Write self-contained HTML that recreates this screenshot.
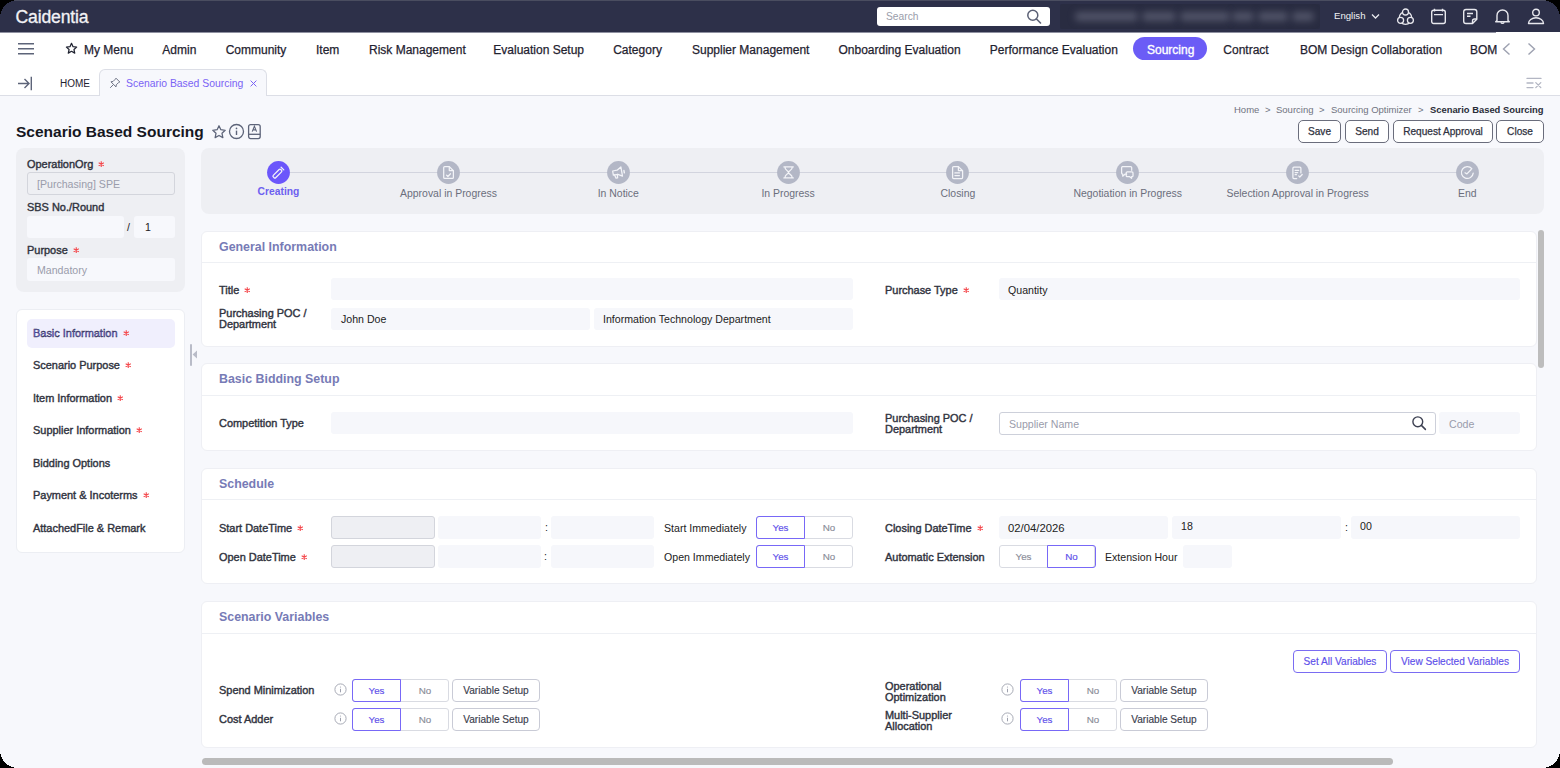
<!DOCTYPE html>
<html><head><meta charset="utf-8">
<style>
*{box-sizing:border-box;margin:0;padding:0}
html,body{width:1560px;height:768px;overflow:hidden;background:#000}
body{font-family:"Liberation Sans",sans-serif;color:#222}
#app{position:absolute;left:0;top:0;width:1560px;height:768px;overflow:hidden;background:#f7f8fc}
.a{position:absolute;white-space:nowrap}
#top{position:absolute;left:0;top:0;width:1560px;height:32px;background:#2d3049}
#nav{position:absolute;left:0;top:32px;width:1560px;height:33px;background:#fff}
#tabs{position:absolute;left:0;top:65px;width:1560px;height:31px;background:#fff;border-bottom:1px solid #dcdee6}
.nv{position:absolute;top:10.5px;font-size:12px;line-height:14px;color:#1f2230;-webkit-text-stroke:0.25px #1f2230}
.panel{position:absolute;background:#fff;border:1px solid #eeeff4;border-radius:6px}
.ptitle{position:absolute;left:17px;font-size:12.4px;font-weight:bold;color:#777bb6}
.pdiv{position:absolute;left:0;right:0;height:1px;background:#eef0f4}
.lbl{position:absolute;font-size:10.95px;font-weight:normal;-webkit-text-stroke:0.4px #30333e;color:#30333e;line-height:11px}
.ast{display:inline-block;margin-left:5px;vertical-align:0.8px}
.inp{position:absolute;background:#f6f7fb;border-radius:3px;height:22px}
.itxt{position:absolute;font-size:10.6px;color:#222;line-height:12px}
.dis{background:#eeeff3;border:1px solid #d3d5dc}
.tg{position:absolute;height:23px;border:1px solid #d9dbe2;border-radius:3px;background:#fff}
.tg .y,.tg .n{position:absolute;top:-1px;height:23px;font-size:9.8px;line-height:21px;text-align:center;-webkit-text-stroke:0.15px currentColor}
.tg .n{line-height:23px}
.btn{position:absolute;border:1px solid #c9cbd6;border-radius:4px;background:#fff;font-size:10.1px;text-align:center;color:#3a3d4d;-webkit-text-stroke:0.15px currentColor}
.ico{position:absolute}
.hb{border-color:#6a6d7c;border-radius:5px;color:#2f3240;-webkit-text-stroke:0.25px #2f3240;line-height:22px!important}
</style></head><body>
<div id="app">
  <!-- TOP BAR -->
  <div id="top">
    <div class="a" style="left:0;top:0;width:1560px;height:1px;background:#4a4d60"></div>
    <div class="a" style="left:15.5px;top:7px;font-size:17.6px;line-height:20px;color:#f2f2f5;letter-spacing:-0.15px;-webkit-text-stroke:0.3px #f2f2f5">Caidentia</div>
    <div class="a" style="left:877px;top:7px;width:173px;height:19px;background:#fff;border-radius:3px"></div>
    <div class="a" style="left:886px;top:10px;font-size:10.25px;line-height:13px;color:#9a9dab">Search</div>
    <svg class="ico" style="left:1026px;top:9px" width="16" height="15" viewBox="0 0 16 15"><circle cx="6.8" cy="6.3" r="5" fill="none" stroke="#5b6075" stroke-width="1.5"/><path d="M10.5 10 L14.5 14" stroke="#5b6075" stroke-width="1.6" stroke-linecap="round"/></svg>
    <div class="a" style="left:1060px;top:4px;width:260px;height:25px;background:#292c41;border-radius:2px;overflow:hidden">
      <div class="a" style="left:15px;top:8px;width:63px;height:9px;background:#515468;filter:blur(3.5px);border-radius:4px"></div><div class="a" style="left:82px;top:8px;width:34px;height:9px;background:#515468;filter:blur(3.5px);border-radius:4px"></div><div class="a" style="left:120px;top:8px;width:50px;height:9px;background:#515468;filter:blur(3.5px);border-radius:4px"></div><div class="a" style="left:172px;top:8px;width:22px;height:9px;background:#515468;filter:blur(3.5px);border-radius:4px"></div><div class="a" style="left:198px;top:8px;width:30px;height:9px;background:#515468;filter:blur(3.5px);border-radius:4px"></div><div class="a" style="left:232px;top:8px;width:22px;height:9px;background:#515468;filter:blur(3.5px);border-radius:4px"></div>
    </div>
    <div class="a" style="left:1334px;top:9px;font-size:9.6px;line-height:14px;color:#f0f0f4">English</div>
    <svg class="ico" style="left:1371px;top:13px" width="9" height="7" viewBox="0 0 9 7"><path d="M1 1.5 L4.5 5 L8 1.5" fill="none" stroke="#e8e8ee" stroke-width="1.3"/></svg>
    <svg class="ico" style="left:1396px;top:8px" width="19" height="17" viewBox="0 0 19 17"><circle cx="9.5" cy="10" r="6.3" fill="none" stroke="#e8e8ee" stroke-width="1.3"/><circle cx="9.5" cy="4" r="3" fill="#2d3049" stroke="#e8e8ee" stroke-width="1.3"/><circle cx="4.6" cy="12.3" r="3" fill="#2d3049" stroke="#e8e8ee" stroke-width="1.3"/><circle cx="14.4" cy="12.3" r="3" fill="#2d3049" stroke="#e8e8ee" stroke-width="1.3"/></svg>
    <svg class="ico" style="left:1430px;top:8px" width="17" height="17" viewBox="0 0 17 17"><rect x="1.7" y="2.2" width="13.6" height="13.3" rx="2" fill="none" stroke="#e8e8ee" stroke-width="1.4"/><path d="M4.5 0.8v2.6M12.5 0.8v2.6M4 6.6h9" stroke="#e8e8ee" stroke-width="1.4"/></svg>
    <svg class="ico" style="left:1462px;top:8px" width="17" height="17" viewBox="0 0 17 17"><path d="M10.5 15.5H4a2.3 2.3 0 0 1-2.3-2.3V3.8A2.3 2.3 0 0 1 4 1.5h8.5a2.3 2.3 0 0 1 2.3 2.3v7.5z" fill="none" stroke="#e8e8ee" stroke-width="1.4"/><path d="M10.5 15.5v-2.5a2 2 0 0 1 2-2h2.3M5 5.5h6M5 8.3h3.5" fill="none" stroke="#e8e8ee" stroke-width="1.4"/></svg>
    <svg class="ico" style="left:1494px;top:8px" width="17" height="17" viewBox="0 0 17 17"><path d="M3 12.5V7.5a5.5 5.5 0 0 1 11 0v5l1.3 1.2H1.7z" fill="none" stroke="#e8e8ee" stroke-width="1.4" stroke-linejoin="round"/><path d="M6.8 14.2a1.8 1.8 0 0 0 3.4 0" fill="none" stroke="#e8e8ee" stroke-width="1.3"/></svg>
    <svg class="ico" style="left:1527px;top:8px" width="18" height="17" viewBox="0 0 18 17"><circle cx="9" cy="4.6" r="3.3" fill="none" stroke="#e8e8ee" stroke-width="1.4"/><path d="M1.5 15.5a7.5 5.7 0 0 1 15 0z" fill="none" stroke="#e8e8ee" stroke-width="1.4" stroke-linejoin="round"/></svg>
  </div>
  <!-- NAV -->
  <div id="nav">
    <div class="a" style="left:0;top:0;width:1560px;height:1px;background:#8f91a1"></div>
    <svg class="ico" style="left:17px;top:10px" width="18" height="14" viewBox="0 0 18 14"><path d="M1 1.8h16M1 6.8h16M1 11.8h16" stroke="#5d6479" stroke-width="1.5"/></svg>
    <svg class="ico" style="left:65px;top:10px" width="13" height="13" viewBox="0 0 24 24"><path d="M12 2.5l2.9 6.2 6.6.7-4.9 4.5 1.4 6.6L12 17.2l-5.9 3.3 1.4-6.6-4.9-4.5 6.6-.7z" fill="none" stroke="#1f2230" stroke-width="2.3" stroke-linejoin="round"/></svg>
    <div class="nv" style="left:84px">My Menu</div>
    <div class="nv" style="left:162.3px">Admin</div>
    <div class="nv" style="left:225.7px">Community</div>
    <div class="nv" style="left:316px">Item</div>
    <div class="nv" style="left:369px">Risk Management</div>
    <div class="nv" style="left:493.3px">Evaluation Setup</div>
    <div class="nv" style="left:613.2px">Category</div>
    <div class="nv" style="left:692px">Supplier Management</div>
    <div class="nv" style="left:838.5px">Onboarding Evaluation</div>
    <div class="nv" style="left:989.8px">Performance Evaluation</div>
    <div class="nv" style="left:1223.3px">Contract</div>
    <div class="nv" style="left:1300px">BOM Design Collaboration</div>
    <div class="a" style="left:1133px;top:5px;width:74px;height:23px;border-radius:12px;background:#6b5cf6"></div>
    <div class="nv" style="left:1147px;color:#fff;-webkit-text-stroke:0.35px #fff">Sourcing</div>
    <div class="a" style="left:1496px;top:0;width:64px;height:33px;background:#fff"></div>
    <div class="nv" style="left:1470px">BOM</div>
    <svg class="ico" style="left:1500px;top:10px" width="13" height="14" viewBox="0 0 13 14"><path d="M9.5 1.5L3.5 7l6 5.5" fill="none" stroke="#9da1b0" stroke-width="1.4"/></svg>
    <svg class="ico" style="left:1525px;top:10px" width="13" height="14" viewBox="0 0 13 14"><path d="M3.5 1.5l6 5.5-6 5.5" fill="none" stroke="#9da1b0" stroke-width="1.4"/></svg>
  </div>
  <!-- TABS -->

  <!-- PAGE HEADER -->
  <div class="a" style="left:16px;top:123px;font-size:15.5px;line-height:18px;font-weight:bold;color:#15171f">Scenario Based Sourcing</div>
  <svg class="ico" style="left:210.5px;top:123.5px" width="16" height="16" viewBox="0 0 24 24"><path d="M12 2.6l2.8 6 6.5.8-4.8 4.5 1.3 6.5L12 17.2l-5.8 3.2 1.3-6.5-4.8-4.5 6.5-.8z" fill="none" stroke="#5d6479" stroke-width="1.9" stroke-linejoin="round"/></svg>
  <svg class="ico" style="left:228px;top:123px" width="17" height="17" viewBox="0 0 17 17"><circle cx="8.5" cy="8.5" r="7" fill="none" stroke="#5d6479" stroke-width="1.3"/><path d="M8.5 7.6v4.4" stroke="#5d6479" stroke-width="1.4"/><circle cx="8.5" cy="5.4" r="0.85" fill="#5d6479"/></svg>
  <svg class="ico" style="left:247px;top:123px" width="15" height="17" viewBox="0 0 15 17"><rect x="1.6" y="1.6" width="11.6" height="14" rx="2" fill="none" stroke="#5d6479" stroke-width="1.3"/><path d="M1.6 11.3h11.6" stroke="#5d6479" stroke-width="1.3"/><path d="M5.2 8.6l2.2-5.4 2.2 5.4M6 6.9h2.8" fill="none" stroke="#5d6479" stroke-width="1.1"/></svg>

  <!-- BREADCRUMB -->
  <div class="a" style="left:1234px;top:104px;font-size:9.5px;line-height:11px;color:#70737f">Home</div>
  <div class="a" style="left:1265px;top:104px;font-size:9.5px;line-height:11px;color:#70737f">&gt;</div>
  <div class="a" style="left:1276px;top:104px;font-size:9.5px;line-height:11px;color:#70737f">Sourcing</div>
  <div class="a" style="left:1319px;top:104px;font-size:9.5px;line-height:11px;color:#70737f">&gt;</div>
  <div class="a" style="left:1331px;top:104px;font-size:9.5px;line-height:11px;color:#70737f">Sourcing Optimizer</div>
  <div class="a" style="left:1418px;top:104px;font-size:9.5px;line-height:11px;color:#70737f">&gt;</div>
  <div class="a" style="left:1430px;top:104px;font-size:9.4px;line-height:11px;font-weight:bold;color:#2a2d38">Scenario Based Sourcing</div>
  <div class="btn hb" style="left:1298px;top:120px;width:43px;height:23px;line-height:21px">Save</div>
  <div class="btn hb" style="left:1345px;top:120px;width:44px;height:23px;line-height:21px">Send</div>
  <div class="btn hb" style="left:1393px;top:120px;width:100px;height:23px;line-height:21px">Request Approval</div>
  <div class="btn hb" style="left:1496px;top:120px;width:48px;height:23px;line-height:21px">Close</div>

  <!-- LEFT TOP PANEL -->
  <div class="a" style="left:16px;top:148px;width:169px;height:144px;background:#eeeff3;border-radius:8px"></div>
  <div class="lbl" style="left:27px;top:159px">OperationOrg<svg class="ast" width="6.5" height="6.5" viewBox="0 0 7 7"><path d="M3.5 0.3V6.7M0.73 1.9L6.27 5.1M0.73 5.1L6.27 1.9" stroke="#f4484c" stroke-width="1.2"/></svg></div>
  <div class="inp dis" style="left:27px;top:172px;width:148px;height:23px"></div>
  <div class="itxt" style="left:37px;top:178px;color:#9a9cab">[Purchasing] SPE</div>
  <div class="lbl" style="left:27px;top:202px">SBS No./Round</div>
  <div class="inp" style="left:27px;top:216px;width:97px;height:22px;background:#f7f8fc"></div>
  <div class="itxt" style="left:127px;top:221px">/</div>
  <div class="inp" style="left:134px;top:216px;width:41px;height:22px;background:#f7f8fc"></div>
  <div class="itxt" style="left:145px;top:221px">1</div>
  <div class="lbl" style="left:27px;top:245px">Purpose<svg class="ast" width="6.5" height="6.5" viewBox="0 0 7 7"><path d="M3.5 0.3V6.7M0.73 1.9L6.27 5.1M0.73 5.1L6.27 1.9" stroke="#f4484c" stroke-width="1.2"/></svg></div>
  <div class="inp" style="left:27px;top:258px;width:148px;height:23px;background:#f7f8fc"></div>
  <div class="itxt" style="left:37px;top:264px;color:#9a9cab">Mandatory</div>

  <!-- LEFT NAV PANEL -->
  <div class="a" style="left:16px;top:308.5px;width:169px;height:244.5px;background:#fff;border:1px solid #eceef3;border-radius:6px"></div>
  <div class="a" style="left:27px;top:319px;width:148px;height:29px;background:#f0effd;border-radius:5px"></div>
  <div class="lbl" style="left:33px;top:328px;color:#6d5ff0">Basic Information<svg class="ast" width="6.5" height="6.5" viewBox="0 0 7 7"><path d="M3.5 0.3V6.7M0.73 1.9L6.27 5.1M0.73 5.1L6.27 1.9" stroke="#f4484c" stroke-width="1.2"/></svg></div>
  <div class="lbl" style="left:33px;top:360px">Scenario Purpose<svg class="ast" width="6.5" height="6.5" viewBox="0 0 7 7"><path d="M3.5 0.3V6.7M0.73 1.9L6.27 5.1M0.73 5.1L6.27 1.9" stroke="#f4484c" stroke-width="1.2"/></svg></div>
  <div class="lbl" style="left:33px;top:393px">Item Information<svg class="ast" width="6.5" height="6.5" viewBox="0 0 7 7"><path d="M3.5 0.3V6.7M0.73 1.9L6.27 5.1M0.73 5.1L6.27 1.9" stroke="#f4484c" stroke-width="1.2"/></svg></div>
  <div class="lbl" style="left:33px;top:425px">Supplier Information<svg class="ast" width="6.5" height="6.5" viewBox="0 0 7 7"><path d="M3.5 0.3V6.7M0.73 1.9L6.27 5.1M0.73 5.1L6.27 1.9" stroke="#f4484c" stroke-width="1.2"/></svg></div>
  <div class="lbl" style="left:33px;top:458px">Bidding Options</div>
  <div class="lbl" style="left:33px;top:490px">Payment &amp; Incoterms<svg class="ast" width="6.5" height="6.5" viewBox="0 0 7 7"><path d="M3.5 0.3V6.7M0.73 1.9L6.27 5.1M0.73 5.1L6.27 1.9" stroke="#f4484c" stroke-width="1.2"/></svg></div>
  <div class="lbl" style="left:33px;top:523px">AttachedFile &amp; Remark</div>
  <div class="a" style="left:190px;top:344px;width:2px;height:22px;background:#b9bcc8;border-radius:1px"></div>
  <svg class="ico" style="left:191.8px;top:350px" width="5" height="9" viewBox="0 0 5 9"><path d="M5 0.5v8L0.6 4.5z" fill="#b9bcc8"/></svg>

  <!-- STEPPER -->
  <div class="a" style="left:201px;top:148px;width:1343px;height:66px;background:#eeeff3;border-radius:8px"></div>
  <div class="a" style="left:278px;top:171.8px;width:1190px;height:1px;background:#d2d4de"></div>
  <svg class="ico" style="left:267.0px;top:160.8px" width="23" height="23" viewBox="-11.5 -11.5 23 23"><circle cx="0" cy="0" r="11.4" fill="#6b56fb"/><g transform="rotate(-45)"><rect x="-6.8" y="-1.7" width="10.5" height="3.4" rx="1.1" stroke="#f3f4f8" stroke-width="1.25" fill="none" stroke-linejoin="round" stroke-linecap="round"/><path d="M5.6 -1.9v3.8" stroke="#f3f4f8" stroke-width="1.25" fill="none" stroke-linejoin="round" stroke-linecap="round" stroke-width="1.6"/></g></svg>
  <div class="a" style="left:218.5px;width:120px;text-align:center;top:185.5px;font-size:10.3px;line-height:12px;font-weight:bold;color:#6d5ff0">Creating</div>
  <svg class="ico" style="left:437.0px;top:160.8px" width="23" height="23" viewBox="-11.5 -11.5 23 23"><circle cx="0" cy="0" r="11.4" fill="#b3b7c6"/><path d="M-3.8 -5.9h4.6l4.1 4.1v6.7a1 1 0 0 1-1 1h-7.7a1 1 0 0 1-1-1v-9.8a1 1 0 0 1 1-1z" stroke="#f3f4f8" stroke-width="1.25" fill="none" stroke-linejoin="round" stroke-linecap="round"/><path d="M0.8 -5.6v3.6h3.8" stroke="#f3f4f8" stroke-width="1.25" fill="none" stroke-linejoin="round" stroke-linecap="round" stroke-width="1"/><path d="M-2 2.6l1.4 1.4 2.6-2.8" stroke="#f3f4f8" stroke-width="1.25" fill="none" stroke-linejoin="round" stroke-linecap="round"/></svg>
  <div class="a" style="left:348.5px;width:200px;text-align:center;top:187.5px;font-size:10.45px;line-height:12px;color:#6b6e7c">Approval in Progress</div>
  <svg class="ico" style="left:606.8px;top:160.8px" width="23" height="23" viewBox="-11.5 -11.5 23 23"><circle cx="0" cy="0" r="11.4" fill="#b3b7c6"/><g transform="rotate(-10)"><path d="M-5.5 -2.5h4.5l4.3-2.6v9.4l-4.3-2.6h-4.5z" stroke="#f3f4f8" stroke-width="1.25" fill="none" stroke-linejoin="round" stroke-linecap="round"/><path d="M-4.3 1.7l0.9 3.4h1.6l0.3-3.4" stroke="#f3f4f8" stroke-width="1.25" fill="none" stroke-linejoin="round" stroke-linecap="round"/><path d="M5.7 -1v2.4" stroke="#f3f4f8" stroke-width="1.4" fill="none" stroke-linecap="round"/></g></svg>
  <div class="a" style="left:518.3px;width:200px;text-align:center;top:187.5px;font-size:10.45px;line-height:12px;color:#6b6e7c">In Notice</div>
  <svg class="ico" style="left:776.6px;top:160.8px" width="23" height="23" viewBox="-11.5 -11.5 23 23"><circle cx="0" cy="0" r="11.4" fill="#b3b7c6"/><path d="M-4.6 -5.6h9.4M-4.6 5.4h9.4M-3.6 -5.6c0 4 3.6 3.5 3.6 5.5s-3.6 1.5-3.6 5.5M3.8 -5.6c0 4-3.8 3.5-3.8 5.5s3.8 1.5 3.8 5.5" stroke="#f3f4f8" stroke-width="1.25" fill="none" stroke-linejoin="round" stroke-linecap="round"/></svg>
  <div class="a" style="left:688.1px;width:200px;text-align:center;top:187.5px;font-size:10.45px;line-height:12px;color:#6b6e7c">In Progress</div>
  <svg class="ico" style="left:946.4px;top:160.8px" width="23" height="23" viewBox="-11.5 -11.5 23 23"><circle cx="0" cy="0" r="11.4" fill="#b3b7c6"/><path d="M-3.9 -5.9h4.8l4.2 4.2v6.7a1 1 0 0 1-1 1h-8a1 1 0 0 1-1-1v-9.9a1 1 0 0 1 1-1z" stroke="#f3f4f8" stroke-width="1.25" fill="none" stroke-linejoin="round" stroke-linecap="round"/><path d="M0.9 -5.6v3.6h3.9" stroke="#f3f4f8" stroke-width="1.25" fill="none" stroke-linejoin="round" stroke-linecap="round" stroke-width="1"/><path d="M-2.6 0.4h4.5M-2.6 3h4.5" stroke="#f3f4f8" stroke-width="1.25" fill="none" stroke-linejoin="round" stroke-linecap="round"/></svg>
  <div class="a" style="left:857.9px;width:200px;text-align:center;top:187.5px;font-size:10.45px;line-height:12px;color:#6b6e7c">Closing</div>
  <svg class="ico" style="left:1116.2px;top:160.8px" width="23" height="23" viewBox="-11.5 -11.5 23 23"><circle cx="0" cy="0" r="11.4" fill="#b3b7c6"/><path d="M-4.6 -5.8h7.8a1 1 0 0 1 1 1v2.6M-0.8 1.6h-1.5l-2.5 2.1v-2.1h-0.1a1 1 0 0 1-1-1v-5.4a1 1 0 0 1 1-1" stroke="#f3f4f8" stroke-width="1.25" fill="none" stroke-linejoin="round" stroke-linecap="round"/><path d="M-0.3 -0.6h4.8a1 1 0 0 1 1 1v2.8a1 1 0 0 1-1 1h-0.4v1.6l-1.9-1.6h-2.5a1 1 0 0 1-1-1v-2.8a1 1 0 0 1 1-1z" stroke="#f3f4f8" stroke-width="1.25" fill="none" stroke-linejoin="round" stroke-linecap="round"/></svg>
  <div class="a" style="left:1027.7px;width:200px;text-align:center;top:187.5px;font-size:10.45px;line-height:12px;color:#6b6e7c">Negotiation in Progress</div>
  <svg class="ico" style="left:1286.1px;top:160.8px" width="23" height="23" viewBox="-11.5 -11.5 23 23"><circle cx="0" cy="0" r="11.4" fill="#b3b7c6"/><path d="M3.4 0.4v-4.7a1 1 0 0 0-1-1h-6a1 1 0 0 0-1 1v9.4a1 1 0 0 0 1 1h2.8" stroke="#f3f4f8" stroke-width="1.25" fill="none" stroke-linejoin="round" stroke-linecap="round"/><path d="M-2.4 -2.2h3.6M-2.4 0h2.6M-2.4 2.2h1.4" stroke="#f3f4f8" stroke-width="1.25" fill="none" stroke-linejoin="round" stroke-linecap="round"/><path d="M1.2 3.4l1.1 1.1 2.4-2.5" stroke="#f3f4f8" stroke-width="1.25" fill="none" stroke-linejoin="round" stroke-linecap="round"/></svg>
  <div class="a" style="left:1197.6px;width:200px;text-align:center;top:187.5px;font-size:10.45px;line-height:12px;color:#6b6e7c">Selection Approval in Progress</div>
  <svg class="ico" style="left:1455.9px;top:160.8px" width="23" height="23" viewBox="-11.5 -11.5 23 23"><circle cx="0" cy="0" r="11.4" fill="#b3b7c6"/><path d="M4.3 -3.8A5.9 5.9 0 1 0 5.7 0.6" stroke="#f3f4f8" stroke-width="1.25" fill="none" stroke-linejoin="round" stroke-linecap="round"/><path d="M-2.5 0.3l1.9 1.1 4.3-4.4" stroke="#f3f4f8" stroke-width="1.25" fill="none" stroke-linejoin="round" stroke-linecap="round"/></svg>
  <div class="a" style="left:1367.4px;width:200px;text-align:center;top:187.5px;font-size:10.45px;line-height:12px;color:#6b6e7c">End</div>
  
  <!-- GENERAL INFORMATION -->
  <div class="panel" style="left:201px;top:230.5px;width:1336px;height:116px">
    <div class="ptitle" style="top:8px">General Information</div>
    <div class="pdiv" style="top:30px"></div>
  </div>
  <div class="lbl" style="left:219px;top:285px">Title<svg class="ast" width="6.5" height="6.5" viewBox="0 0 7 7"><path d="M3.5 0.3V6.7M0.73 1.9L6.27 5.1M0.73 5.1L6.27 1.9" stroke="#f4484c" stroke-width="1.2"/></svg></div>
  <div class="inp" style="left:331px;top:278px;width:522px;height:22px"></div>
  <div class="lbl" style="left:219px;top:308px">Purchasing POC /<br>Department</div>
  <div class="inp" style="left:331px;top:308px;width:259px;height:22px"></div>
  <div class="itxt" style="left:341px;top:313px">John Doe</div>
  <div class="inp" style="left:594px;top:308px;width:259px;height:22px"></div>
  <div class="itxt" style="left:603px;top:313px">Information Technology Department</div>
  <div class="lbl" style="left:885px;top:285px">Purchase Type<svg class="ast" width="6.5" height="6.5" viewBox="0 0 7 7"><path d="M3.5 0.3V6.7M0.73 1.9L6.27 5.1M0.73 5.1L6.27 1.9" stroke="#f4484c" stroke-width="1.2"/></svg></div>
  <div class="inp" style="left:999px;top:278px;width:521px;height:22px"></div>
  <div class="itxt" style="left:1008px;top:284px">Quantity</div>

  <!-- BASIC BIDDING SETUP -->
  <div class="panel" style="left:201px;top:363px;width:1336px;height:88px">
    <div class="ptitle" style="top:8px">Basic Bidding Setup</div>
    <div class="pdiv" style="top:31px"></div>
  </div>
  <div class="lbl" style="left:219px;top:418px">Competition Type</div>
  <div class="inp" style="left:331px;top:412px;width:522px;height:22px"></div>
  <div class="lbl" style="left:885px;top:413px">Purchasing POC /<br>Department</div>
  <div class="a" style="left:999px;top:412px;width:437px;height:23px;border:1px solid #cdd0da;border-radius:3px;background:#fff"></div>
  <div class="itxt" style="left:1009px;top:418px;color:#9a9cab">Supplier Name</div>
  <svg class="ico" style="left:1411px;top:415px" width="16" height="16" viewBox="0 0 16 16"><circle cx="6.8" cy="6.8" r="4.9" fill="none" stroke="#3d4152" stroke-width="1.4"/><path d="M10.4 10.4l4 4" stroke="#3d4152" stroke-width="1.5" stroke-linecap="round"/></svg>
  <div class="inp" style="left:1439px;top:412px;width:81px;height:22px"></div>
  <div class="itxt" style="left:1449px;top:418px;color:#9a9cab">Code</div>

  <!-- SCHEDULE -->
  <div class="panel" style="left:201px;top:468px;width:1336px;height:116px">
    <div class="ptitle" style="top:8px">Schedule</div>
    <div class="pdiv" style="top:30px"></div>
  </div>
  <div class="lbl" style="left:219px;top:523px">Start DateTime<svg class="ast" width="6.5" height="6.5" viewBox="0 0 7 7"><path d="M3.5 0.3V6.7M0.73 1.9L6.27 5.1M0.73 5.1L6.27 1.9" stroke="#f4484c" stroke-width="1.2"/></svg></div>
  <div class="inp dis" style="left:331px;top:516px;width:104px;height:23px"></div>
  <div class="inp" style="left:438px;top:516px;width:103px;height:23px"></div>
  <div class="itxt" style="left:545px;top:521px">:</div>
  <div class="inp" style="left:551px;top:516px;width:103px;height:23px"></div>
  <div class="itxt" style="left:664px;top:522px">Start Immediately</div>
  <div class="tg" style="left:756px;top:516px;width:97px"><div class="y" style="left:-1px;width:49px;border:1px solid #7868f7;border-radius:3px 0 0 3px;color:#5e50ea">Yes</div><div class="n" style="left:48px;width:48px;color:#8a8d99">No</div></div>
  <div class="lbl" style="left:219px;top:552px">Open DateTime<svg class="ast" width="6.5" height="6.5" viewBox="0 0 7 7"><path d="M3.5 0.3V6.7M0.73 1.9L6.27 5.1M0.73 5.1L6.27 1.9" stroke="#f4484c" stroke-width="1.2"/></svg></div>
  <div class="inp dis" style="left:331px;top:545px;width:104px;height:23px"></div>
  <div class="inp" style="left:438px;top:545px;width:103px;height:23px"></div>
  <div class="itxt" style="left:544px;top:550px">:</div>
  <div class="inp" style="left:551px;top:545px;width:103px;height:23px"></div>
  <div class="itxt" style="left:664px;top:551px">Open Immediately</div>
  <div class="tg" style="left:756px;top:545px;width:97px"><div class="y" style="left:-1px;width:49px;border:1px solid #7868f7;border-radius:3px 0 0 3px;color:#5e50ea">Yes</div><div class="n" style="left:48px;width:48px;color:#8a8d99">No</div></div>
  <div class="lbl" style="left:885px;top:523px">Closing DateTime<svg class="ast" width="6.5" height="6.5" viewBox="0 0 7 7"><path d="M3.5 0.3V6.7M0.73 1.9L6.27 5.1M0.73 5.1L6.27 1.9" stroke="#f4484c" stroke-width="1.2"/></svg></div>
  <div class="inp" style="left:999px;top:516px;width:169px;height:23px"></div>
  <div class="itxt" style="left:1008px;top:521.5px;font-size:11.3px">02/04/2026</div>
  <div class="inp" style="left:1172px;top:516px;width:169px;height:23px"></div>
  <div class="itxt" style="left:1181px;top:520px">18</div>
  <div class="itxt" style="left:1345px;top:521px">:</div>
  <div class="inp" style="left:1351px;top:516px;width:169px;height:23px"></div>
  <div class="itxt" style="left:1360px;top:520px">00</div>
  <div class="lbl" style="left:885px;top:552px">Automatic Extension</div>
  <div class="tg" style="left:999px;top:545px;width:96px"><div class="y" style="left:0;width:47px;color:#8a8d99;line-height:23px">Yes</div><div class="n" style="left:47px;width:49px;border:1px solid #7868f7;border-radius:0 3px 3px 0;color:#5e50ea;line-height:21px">No</div></div>
  <div class="itxt" style="left:1105px;top:551px">Extension Hour</div>
  <div class="inp" style="left:1183px;top:545px;width:49px;height:23px"></div>

  <!-- SCENARIO VARIABLES -->
  <div class="panel" style="left:201px;top:601px;width:1336px;height:146.5px">
    <div class="ptitle" style="top:8px">Scenario Variables</div>
    <div class="pdiv" style="top:31px"></div>
  </div>
  <div class="btn" style="left:1293px;top:650px;width:94px;height:23px;line-height:21px;border-color:#7a6cf2;color:#5e50ea">Set All Variables</div>
  <div class="btn" style="left:1390px;top:650px;width:130px;height:23px;line-height:21px;border-color:#7a6cf2;color:#5e50ea">View Selected Variables</div>
  <div class="lbl" style="left:219px;top:685px">Spend Minimization</div>
  <svg class="ico" style="left:334px;top:683px" width="13" height="13" viewBox="0 0 13 13"><circle cx="6.5" cy="6.5" r="5.6" fill="none" stroke="#9ea1ae" stroke-width="0.9"/><path d="M6.5 5.8v3.5" stroke="#9ea1ae" stroke-width="1"/><circle cx="6.5" cy="4" r="0.6" fill="#9ea1ae"/></svg>
  <div class="tg" style="left:352px;top:679px;width:97px"><div class="y" style="left:-1px;width:49px;border:1px solid #7868f7;border-radius:3px 0 0 3px;color:#5e50ea">Yes</div><div class="n" style="left:48px;width:48px;color:#8a8d99">No</div></div>
  <div class="btn" style="left:452px;top:679px;width:88px;height:23px;line-height:21px">Variable Setup</div>
  <div class="lbl" style="left:219px;top:714px">Cost Adder</div>
  <svg class="ico" style="left:334px;top:712px" width="13" height="13" viewBox="0 0 13 13"><circle cx="6.5" cy="6.5" r="5.6" fill="none" stroke="#9ea1ae" stroke-width="0.9"/><path d="M6.5 5.8v3.5" stroke="#9ea1ae" stroke-width="1"/><circle cx="6.5" cy="4" r="0.6" fill="#9ea1ae"/></svg>
  <div class="tg" style="left:352px;top:708px;width:97px"><div class="y" style="left:-1px;width:49px;border:1px solid #7868f7;border-radius:3px 0 0 3px;color:#5e50ea">Yes</div><div class="n" style="left:48px;width:48px;color:#8a8d99">No</div></div>
  <div class="btn" style="left:452px;top:708px;width:88px;height:23px;line-height:21px">Variable Setup</div>
  <div class="lbl" style="left:885px;top:680.5px">Operational<br>Optimization</div>
  <svg class="ico" style="left:1001px;top:683px" width="13" height="13" viewBox="0 0 13 13"><circle cx="6.5" cy="6.5" r="5.6" fill="none" stroke="#9ea1ae" stroke-width="0.9"/><path d="M6.5 5.8v3.5" stroke="#9ea1ae" stroke-width="1"/><circle cx="6.5" cy="4" r="0.6" fill="#9ea1ae"/></svg>
  <div class="tg" style="left:1020px;top:679px;width:97px"><div class="y" style="left:-1px;width:49px;border:1px solid #7868f7;border-radius:3px 0 0 3px;color:#5e50ea">Yes</div><div class="n" style="left:48px;width:48px;color:#8a8d99">No</div></div>
  <div class="btn" style="left:1120px;top:679px;width:88px;height:23px;line-height:21px">Variable Setup</div>
  <div class="lbl" style="left:885px;top:709.5px">Multi-Supplier<br>Allocation</div>
  <svg class="ico" style="left:1001px;top:712px" width="13" height="13" viewBox="0 0 13 13"><circle cx="6.5" cy="6.5" r="5.6" fill="none" stroke="#9ea1ae" stroke-width="0.9"/><path d="M6.5 5.8v3.5" stroke="#9ea1ae" stroke-width="1"/><circle cx="6.5" cy="4" r="0.6" fill="#9ea1ae"/></svg>
  <div class="tg" style="left:1020px;top:708px;width:97px"><div class="y" style="left:-1px;width:49px;border:1px solid #7868f7;border-radius:3px 0 0 3px;color:#5e50ea">Yes</div><div class="n" style="left:48px;width:48px;color:#8a8d99">No</div></div>
  <div class="btn" style="left:1120px;top:708px;width:88px;height:23px;line-height:21px">Variable Setup</div>
  

  <!-- SCROLLBARS -->
  <div class="a" style="left:1538px;top:230px;width:6px;height:138px;background:#bdbdbd;border-radius:3px"></div>
  <div class="a" style="left:202px;top:758px;width:1191px;height:7px;background:#bababa;border-radius:4px"></div>
  <div id="tabs">
    <svg class="ico" style="left:17px;top:11px" width="16" height="15" viewBox="0 0 16 15"><path d="M1 7.5h11M7.5 3l4.5 4.5L7.5 12" fill="none" stroke="#5d6479" stroke-width="1.4"/><path d="M14.3 0.8v13.4" stroke="#5d6479" stroke-width="1.4"/></svg>
    <div class="a" style="left:60px;top:12px;font-size:10px;line-height:13px;color:#1f2230">HOME</div>
    <div class="a" style="left:99px;top:4px;width:168px;height:27px;background:#f7f8fc;border:1px solid #dcdee6;border-bottom:none;border-radius:6px 6px 0 0"></div>
    <svg class="ico" style="left:109px;top:12px" width="12" height="12" viewBox="0 0 12 12"><path d="M7 1.2l3.8 3.8-1.3.6-2.2 2.2-.3 2.1L1.9 4.8 4 4.5l2.2-2.2z M4.3 7.7L1.2 10.8" fill="none" stroke="#6e7385" stroke-width="1" stroke-linejoin="round"/></svg>
    <div class="a" style="left:126px;top:12px;font-size:10.4px;line-height:13px;color:#7a63f5">Scenario Based Sourcing</div>
    <svg class="ico" style="left:250px;top:14.5px" width="7" height="7" viewBox="0 0 7 7"><path d="M0.6 0.6l5.8 5.8M6.4 0.6l-5.8 5.8" stroke="#7a63f5" stroke-width="1"/></svg>
    <svg class="ico" style="left:1525px;top:11px" width="18" height="14" viewBox="0 0 18 14"><path d="M2 2.4h14M2 7h6M2 11.6h6" stroke="#b3b6c3" stroke-width="1.3" stroke-linecap="round"/><path d="M10.8 6.6l5 5M15.8 6.6l-5 5" stroke="#b3b6c3" stroke-width="1.3" stroke-linecap="round"/></svg>
  </div>
  <svg class="ico" style="left:0;top:0;z-index:99" width="18" height="18" shape-rendering="crispEdges"><path d="M0 0H18A18 18 0 0 0 0 18Z" fill="#000"/></svg>
  <svg class="ico" style="right:0;top:0;z-index:99" width="18" height="18" shape-rendering="crispEdges"><path d="M18 0V18A18 18 0 0 0 0 0Z" fill="#000"/></svg>
  <svg class="ico" style="left:0;bottom:0;z-index:99" width="18" height="18" shape-rendering="crispEdges"><path d="M0 18V0A18 18 0 0 0 18 18Z" fill="#000"/></svg>
  <svg class="ico" style="right:0;bottom:0;z-index:99" width="18" height="18" shape-rendering="crispEdges"><path d="M18 18H0A18 18 0 0 0 18 0Z" fill="#000"/></svg>
</div>
</body></html>
